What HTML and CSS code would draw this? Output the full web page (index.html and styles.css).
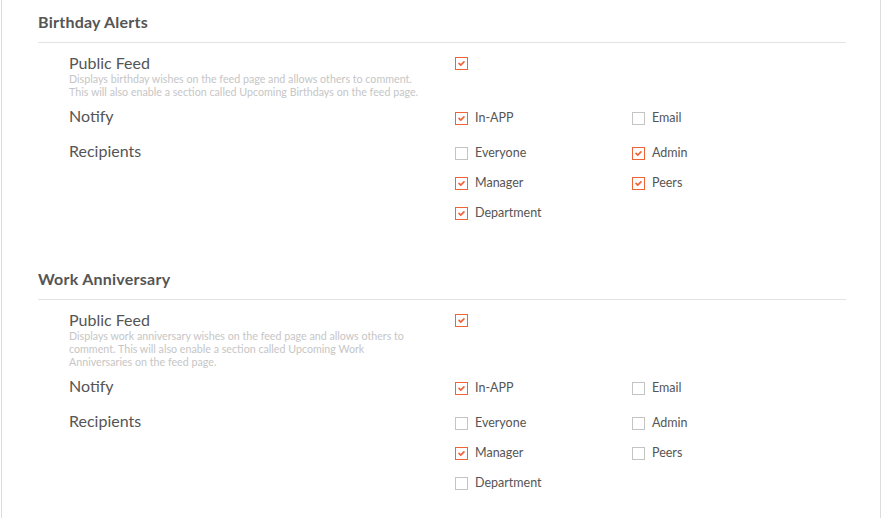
FILE: index.html
```html
<!DOCTYPE html>
<html>
<head>
<meta charset="utf-8">
<link rel="stylesheet" href="styles.css">
</head>
<body>
<div class="panel">
  <section class="section">
    <h2 class="section-title">Birthday Alerts</h2>
    <div class="setting">
      <div class="setting-label">
        <div class="label-text">Public Feed</div>
        <div class="desc">Displays birthday wishes on the feed page and allows others to comment. This will also enable a section called Upcoming Birthdays on the feed page.</div>
      </div>
      <div class="options feed">
        <label class="opt"><span class="box on"><svg viewBox="0 0 13 13"><path d="M3.6 6.4 L5.6 8.4 L9.4 4.6" /></svg></span></label>
      </div>
    </div>
    <div class="setting">
      <div class="setting-label"><div class="label-text">Notify</div></div>
      <div class="options">
        <label class="opt"><span class="box on"><svg viewBox="0 0 13 13"><path d="M3.6 6.4 L5.6 8.4 L9.4 4.6" /></svg></span><span class="opt-text">In-APP</span></label>
        <label class="opt"><span class="box"></span><span class="opt-text">Email</span></label>
      </div>
    </div>
    <div class="setting recip">
      <div class="setting-label"><div class="label-text">Recipients</div></div>
      <div class="options">
        <label class="opt"><span class="box"></span><span class="opt-text">Everyone</span></label>
        <label class="opt"><span class="box on"><svg viewBox="0 0 13 13"><path d="M3.6 6.4 L5.6 8.4 L9.4 4.6" /></svg></span><span class="opt-text">Admin</span></label>
        <label class="opt"><span class="box on"><svg viewBox="0 0 13 13"><path d="M3.6 6.4 L5.6 8.4 L9.4 4.6" /></svg></span><span class="opt-text">Manager</span></label>
        <label class="opt"><span class="box on"><svg viewBox="0 0 13 13"><path d="M3.6 6.4 L5.6 8.4 L9.4 4.6" /></svg></span><span class="opt-text">Peers</span></label>
        <label class="opt"><span class="box on"><svg viewBox="0 0 13 13"><path d="M3.6 6.4 L5.6 8.4 L9.4 4.6" /></svg></span><span class="opt-text">Department</span></label>
      </div>
    </div>
  </section>

  <section class="section second">
    <h2 class="section-title">Work Anniversary</h2>
    <div class="setting">
      <div class="setting-label">
        <div class="label-text">Public Feed</div>
        <div class="desc">Displays work anniversary wishes on the feed page and allows others to comment. This will also enable a section called Upcoming Work Anniversaries on the feed page.</div>
      </div>
      <div class="options feed">
        <label class="opt"><span class="box on"><svg viewBox="0 0 13 13"><path d="M3.6 6.4 L5.6 8.4 L9.4 4.6" /></svg></span></label>
      </div>
    </div>
    <div class="setting">
      <div class="setting-label"><div class="label-text">Notify</div></div>
      <div class="options">
        <label class="opt"><span class="box on"><svg viewBox="0 0 13 13"><path d="M3.6 6.4 L5.6 8.4 L9.4 4.6" /></svg></span><span class="opt-text">In-APP</span></label>
        <label class="opt"><span class="box"></span><span class="opt-text">Email</span></label>
      </div>
    </div>
    <div class="setting recip">
      <div class="setting-label"><div class="label-text">Recipients</div></div>
      <div class="options">
        <label class="opt"><span class="box"></span><span class="opt-text">Everyone</span></label>
        <label class="opt"><span class="box"></span><span class="opt-text">Admin</span></label>
        <label class="opt"><span class="box on"><svg viewBox="0 0 13 13"><path d="M3.6 6.4 L5.6 8.4 L9.4 4.6" /></svg></span><span class="opt-text">Manager</span></label>
        <label class="opt"><span class="box"></span><span class="opt-text">Peers</span></label>
        <label class="opt"><span class="box"></span><span class="opt-text">Department</span></label>
      </div>
    </div>
  </section>
</div>
</body>
</html>
```

FILE: styles.css
```css
html, body {
  margin: 0;
  padding: 0;
  background: #ffffff;
  overflow: hidden;
}

body {
  font-family: Lato, "Open Sans", sans-serif;
  color: #555555;
}

.panel {
  margin-left: 1px;
  width: 880px;
  min-height: 560px;
  border-left: 1px solid #dcdcdc;
  border-right: 1px solid #dcdcdc;
  box-sizing: border-box;
  padding: 12px 0 0 36px;
}

.section {
  width: 808px;
}

.section.second {
  margin-top: 46px;
}

.section-title {
  margin: 0;
  font-size: 16px;
  font-weight: 700;
  letter-spacing: 0.25px;
  line-height: 20px;
  color: #555555;
  padding-bottom: 10px;
  border-bottom: 1px solid #e3e3e3;
}

.setting {
  display: flex;
  padding-left: 31px;
  margin-top: 9px;
}

.section-title + .setting {
  margin-top: 11px;
}

.setting.recip {
  margin-top: 14px;
}

.setting-label {
  width: 386px;
  flex: none;
}

.label-text {
  font-size: 16px;
  line-height: 18px;
  color: #555555;
}

.desc {
  font-size: 10.7px;
  line-height: 13px;
  color: #c6c6c6;
  max-width: 352px;
}

.options {
  display: grid;
  grid-template-columns: 177px 177px;
  grid-auto-rows: 20px;
  row-gap: 10px;
  padding-top: 1px;
}

.options.feed {
  grid-auto-rows: 18px;
  padding-top: 0;
}

.opt {
  display: flex;
  align-items: center;
  gap: 7px;
}

.box {
  width: 13px;
  height: 13px;
  box-sizing: border-box;
  border: 1px solid #c4c4c4;
  background: #ffffff;
  flex: none;
  display: block;
}

.box.on {
  border-color: #ee6437;
}

.box svg {
  display: block;
  width: 11px;
  height: 11px;
}

.box svg path {
  fill: none;
  stroke: #ee6437;
  stroke-width: 2;
  stroke-linecap: round;
  stroke-linejoin: round;
}

.opt-text {
  font-size: 12.5px;
  line-height: 20px;
  color: #555555;
}
```
